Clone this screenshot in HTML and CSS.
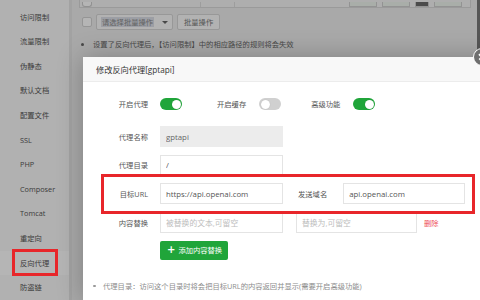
FILE: index.html
```html
<!DOCTYPE html>
<html lang="zh-CN">
<head>
<meta charset="utf-8">
<title>修改反向代理</title>
<link rel="stylesheet" href="styles.css">
</head>
<body>
<div class="page">
  <aside class="side">
    <div class="side-item">访问限制</div>
    <div class="side-item">流量限制</div>
    <div class="side-item">伪静态</div>
    <div class="side-item">默认文档</div>
    <div class="side-item">配置文件</div>
    <div class="side-item">SSL</div>
    <div class="side-item">PHP</div>
    <div class="side-item">Composer</div>
    <div class="side-item">Tomcat</div>
    <div class="side-item">重定向</div>
    <div class="side-item active">反向代理</div>
    <div class="side-item">防盗链</div>
  </aside>
  <main class="main">
    <div class="table-tail">
      <span class="cell chk"></span>
      <span class="cell t1"></span>
      <span class="cell t2"></span>
      <span class="cell t3"></span>
      <span class="cell ops"><i class="op g"></i><i class="op g"></i><i class="op d"></i><i class="op g"></i></span>
    </div>
    <div class="batch">
      <span class="checkbox"></span>
      <span class="select"><span class="sel-text">请选择批量操作</span><span class="caret"></span></span>
      <span class="btn-plain">批量操作</span>
    </div>
    <ul class="tips">
      <li>设置了反向代理后，【访问限制】中的相应路径的规则将会失效</li>
    </ul>
  </main>
  <div class="scrollbar"></div>
</div>
<div class="mask"></div>
<div class="mark mark-side"></div>

<div class="modal">
  <div class="modal-title">修改反向代理[gptapi]</div>
  <span class="modal-close" aria-label="关闭"></span>
  <div class="modal-body">
    <div class="row switches">
      <label class="lbl">开启代理</label>
      <span class="toggle on"></span>
      <label class="sw-lbl">开启缓存</label>
      <span class="toggle"></span>
      <label class="sw-lbl">高级功能</label>
      <span class="toggle on"></span>
    </div>
    <div class="row">
      <label class="lbl">代理名称</label>
      <input class="inp disabled" value="gptapi" disabled>
    </div>
    <div class="row">
      <label class="lbl">代理目录</label>
      <input class="inp" value="/">
    </div>
    <div class="row">
      <label class="lbl">目标URL</label>
      <input class="inp" value="https://api.openai.com">
      <label class="lbl2">发送域名</label>
      <input class="inp inp-2" value="api.openai.com">
    </div>
    <div class="row">
      <label class="lbl">内容替换</label>
      <input class="inp" placeholder="被替换的文本,可留空">
      <input class="inp inp-3" placeholder="替换为,可留空">
      <span class="del">删除</span>
    </div>
    <div class="btn-row">
      <span class="btn-green"><span class="plus">+</span>添加内容替换</span>
    </div>
    <ul class="help">
      <li>代理目录：访问这个目录时将会把目标URL的内容返回并显示(需要开启高级功能)</li>
    </ul>
    <div class="mark mark-url"></div>
  </div>
</div>
</body>
</html>
```

FILE: styles.css
```css
* { box-sizing: border-box; }
html, body {
  margin: 0;
  width: 480px;
  height: 300px;
  overflow: hidden;
}
body {
  position: relative;
  font-family: "Open Sans", "Noto Sans CJK SC", sans-serif;
  font-size: 7.3px;
  color: #555;
  background: #eeeeee;
}

/* ---------- background page ---------- */
.page {
  display: flex;
  height: 300px;
}
.side {
  width: 72px;
  flex: none;
  padding-top: 4.7px;
  background: #f9f9f9;
  border-right: 3px solid #e4e4e4;
}
.side-item {
  height: 24.6px;
  line-height: 24.6px;
  padding-left: 20px;
  color: #555;
  white-space: nowrap;
}
.side-item.active {
  background: #ffffff;
}
.main {
  flex: 1;
  padding-left: 7px;
  background: #eeeeee;
}
.table-tail {
  display: flex;
  align-items: flex-end;
  height: 8px;
  margin-right: 9px;
  border: 1px solid #d9d9d9;
  border-top: none;
  background: #f6f6f6;
  overflow: hidden;
}
.cell { display: inline-block; height: 5px; }
.chk { width: 10px; margin-left: 2px; border: 1px solid #ccc; border-top: none; border-radius: 0 0 3px 3px; background: #fff; }
.t1 { margin-left: 28px; width: 80px; }
.t2 { width: 34px; border-left: 1px solid #ddd; }
.t3 { width: 100px; border-left: 1px solid #ddd; }
.ops { display: flex; gap: 5px; margin-left: auto; margin-right: 8px; }
.op { display: inline-block; width: 28px; height: 5px; border: 1px solid #cfcfcf; border-top: none; background: #eef5ef; }
.op.d { width: 14px; background: #6a6a6a; }

.batch {
  display: flex;
  align-items: center;
  gap: 4px;
  margin-top: 6px;
  height: 16px;
}
.checkbox {
  width: 10px;
  height: 10px;
  margin-left: 3px;
  border: 1px solid #d2d2d2;
  border-radius: 2px;
  background: #fff;
}
.select {
  display: flex;
  align-items: center;
  width: 77px;
  height: 16px;
  padding-left: 4px;
  border: 1px solid #d6d6d6;
  border-radius: 2px;
  background: #fbfbfb;
}
.sel-text {
  background: #dcdfe8;
  color: #8a8a8a;
  padding: 0 1px;
}
.caret {
  margin-left: auto;
  margin-right: 4px;
  width: 0;
  height: 0;
  border-left: 3px solid transparent;
  border-right: 3px solid transparent;
  border-top: 3.5px solid #666;
}
.btn-plain {
  height: 16px;
  line-height: 14px;
  padding: 0 6px;
  border: 1px solid #d6d6d6;
  border-radius: 2px;
  background: #fbfbfb;
  color: #777;
}
.tips {
  margin: 8px 0 0;
  padding-left: 14px;
  color: #666;
}
.tips li { line-height: 12px; }
.scrollbar {
  position: absolute;
  right: 0;
  top: 0;
  width: 3px;
  height: 60px;
  background: #7a7a7a;
}

.mask {
  position: absolute;
  inset: 0;
  background: rgba(0, 0, 0, 0.29);
}

/* ---------- annotation marks ---------- */
.mark {
  position: absolute;
  border: 3.5px solid #e8262a;
  z-index: 5;
}
.mark-side {
  left: 12px;
  top: 249px;
  width: 46px;
  height: 27px;
}
.mark-url {
  left: 18px;
  top: 92px;
  width: 374px;
  height: 40px;
}

/* ---------- modal ---------- */
.modal {
  position: absolute;
  left: 83px;
  top: 57px;
  bottom: 0;
  width: 415px;
  background: #fff;
  box-shadow: 0 0 24px rgba(0, 0, 0, 0.25);
  z-index: 3;
}
.modal-title {
  height: 25px;
  line-height: 25px;
  padding-left: 13px;
  font-size: 8.2px;
  color: #333;
  background: #f8f8f8;
  border-bottom: 1px solid #ececec;
}
.modal-close {
  position: absolute;
  left: 390px;
  top: -9px;
  width: 18px;
  height: 18px;
  border-radius: 50%;
  background: #6e6e6e;
  border: 1.5px solid #fff;
}
.modal-close::before,
.modal-close::after {
  content: "";
  position: absolute;
  left: 3.5px;
  top: 6.7px;
  width: 8px;
  height: 1.6px;
  background: #fff;
  transform: rotate(45deg);
}
.modal-close::after { transform: rotate(-45deg); }
.modal-body {
  position: relative;
  padding-top: 16px;
  padding-left: 17px;
}
.row {
  display: flex;
  align-items: center;
  height: 21px;
  margin-bottom: 7.7px;
}
.row.switches {
  height: 12px;
  margin-bottom: 16px;
}
.lbl {
  width: 48px;
  flex: none;
  margin-right: 12px;
  text-align: right;
  color: #555;
  white-space: nowrap;
}
.sw-lbl {
  margin-left: 35px;
  margin-right: 13px;
  color: #555;
  white-space: nowrap;
}
.sw-lbl + .toggle + .sw-lbl { margin-left: 30px; }
.toggle {
  position: relative;
  width: 22px;
  height: 12px;
  border-radius: 6px;
  background: #d0d0d0;
  flex: none;
}
.toggle::after {
  content: "";
  position: absolute;
  top: 1.5px;
  left: 1.5px;
  width: 9px;
  height: 9px;
  border-radius: 50%;
  background: #fff;
  box-shadow: 0 0 1px rgba(0,0,0,.2);
}
.toggle.on { background: #20a53a; }
.toggle.on::after { left: 11.5px; }

.inp {
  width: 123px;
  height: 21px;
  flex: none;
  padding: 0 5px;
  border: 1px solid #e4e4e4;
  background: #fff;
  font-family: "Open Sans", "Noto Sans CJK SC", sans-serif;
  font-size: 7.8px;
  color: #555;
  outline: none;
}
.inp::placeholder { color: #bdbdbd; }
.inp.disabled {
  background: #ececec;
  border-color: #ececec;
  color: #666;
}
.lbl2 {
  margin-left: 15px;
  margin-right: 16px;
  white-space: nowrap;
}
.inp-2 { width: 122px; }
.inp-3 { width: 121px; margin-left: 13px; }
.del {
  margin-left: 7px;
  color: #ee4b57;
}
.btn-row {
  margin-top: 0.3px;
  padding-left: 60px;
}
.btn-green {
  display: inline-flex;
  align-items: center;
  height: 19px;
  padding: 0 6px 0 7px;
  border-radius: 2px;
  background: #20a53a;
  color: #fff;
  white-space: nowrap;
}
.plus {
  font-family: "DejaVu Sans", sans-serif;
  font-weight: bold;
  font-size: 10px;
  margin-right: 3px;
  line-height: 1;
}
.help {
  margin: 20px 0 0;
  padding-left: 0;
  list-style: none;
  color: #8c8c8c;
}
.help li {
  position: relative;
  padding-left: 3px;
  line-height: 12px;
  white-space: nowrap;
}
.help li::before {
  content: "";
  position: absolute;
  left: -7px;
  top: 5px;
  width: 2.5px;
  height: 2.5px;
  border-radius: 50%;
  background: #999;
}
```
